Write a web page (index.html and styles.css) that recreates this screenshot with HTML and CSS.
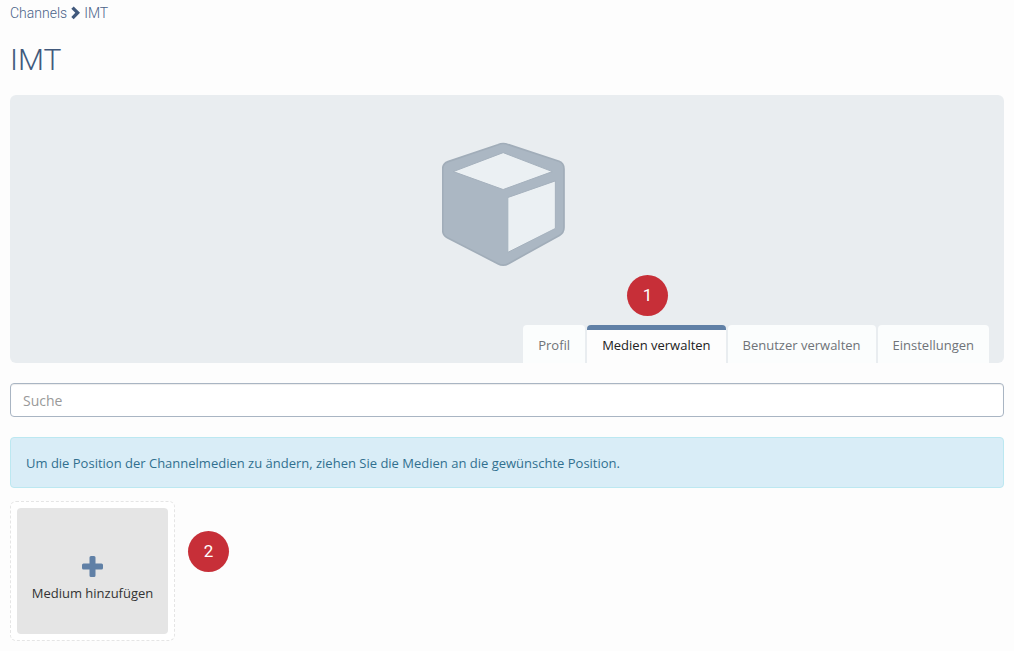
FILE: index.html
```html
<!DOCTYPE html>
<html lang="de">
<head>
<meta charset="utf-8">
<title>IMT</title>
<link rel="stylesheet" href="styles.css">
</head>
<body>
<main class="page">
  <nav class="breadcrumb">
    <a href="#">Channels</a>
    <svg class="chevron" viewBox="0 0 9 14" aria-hidden="true"><path d="M0.3 2.8 2.7 0.5 9 6.8 2.7 13.2 0.3 10.9 4.3 6.8Z"/></svg>
    <a href="#">IMT</a>
  </nav>
  <h1 class="title">IMT</h1>

  <section class="banner">
    <svg class="cube" viewBox="66 36 370 374" aria-hidden="true">
      <path class="cube-body" d="M234 43Q250 36 266 43L418 93Q433 99 433 116V292Q433 308 419 316L266 401Q250 410 234 401L82 323Q68 316 68 300V116Q68 100 84 94Z"/>
      <path class="cube-face" d="M250 67 398 124 250 178 100 124Z"/>
      <path class="cube-face" d="M264 202 407 152V295L264 367Z"/>
    </svg>
    <nav class="tabs">
      <a class="tab" href="#">Profil</a>
      <a class="tab tab-active" href="#" aria-current="page">Medien verwalten<span class="marker marker-tab">1</span></a>
      <a class="tab" href="#">Benutzer verwalten</a>
      <a class="tab" href="#">Einstellungen</a>
    </nav>
  </section>

  <input class="search" type="search" placeholder="Suche" aria-label="Suche">

  <p class="info">Um die Position der Channelmedien zu ändern, ziehen Sie die Medien an die gewünschte Position.</p>

  <div class="media-item">
    <button class="add" type="button">
      <svg class="plus" viewBox="0 0 21 21" aria-hidden="true"><path d="M9 0H12Q13.500 0 13.500 1.500V7.500H19.500Q21 7.500 21 9V12Q21 13.500 19.500 13.500H13.500V19.500Q13.500 21 12 21H9Q7.500 21 7.500 19.500V13.500H1.500Q0 13.500 0 12V9Q0 7.500 1.500 7.500H7.500V1.500Q7.500 0 9 0Z"/></svg>
      <span>Medium hinzufügen</span>
    </button>
    <span class="marker marker-add">2</span>
  </div>
</main>
</body>
</html>
```
FILE: styles.css
```css
* {
  box-sizing: border-box;
}

body {
  margin: 0;
  background: #fdfdfd;
  color: #333;
  font: 13px/20px "Open Sans", sans-serif;
}

.page {
  padding: 3px 10px 10px;
}

.breadcrumb {
  display: flex;
  align-items: center;
  gap: 4px;
  font: 300 14px/20px Roboto, sans-serif;
}

.breadcrumb a {
  color: #4a6288;
  text-decoration: none;
}

.chevron {
  width: 9px;
  height: 14px;
  fill: #41597c;
}

.title {
  margin: 19px 0 17px;
  color: #41597c;
  font: 300 30px/36px Roboto, sans-serif;
}

.banner {
  display: flex;
  flex-direction: column;
  align-items: center;
  padding-top: 47px;
  background: #e9edf0;
  border-radius: 6px;
}

.cube {
  width: 123px;
  height: 125px;
  margin-right: 7px;
}

.cube-body {
  fill: #abb7c3;
  stroke: #a1adb9;
  stroke-width: 5px;
}

.cube-face {
  fill: #ebf0f3;
  stroke: #a5b1bd;
  stroke-width: 3px;
}

.tabs {
  display: flex;
  align-self: flex-end;
  gap: 2px;
  margin-top: 58px;
  padding-right: 15px;
}

.tab {
  position: relative;
  padding: 10px 15px 8px;
  border-radius: 4px 4px 0 0;
  background: #fbfdfd;
  color: #6f7378;
  text-decoration: none;
}

.tab-active {
  padding-top: 5px;
  border-top: 5px solid #6080a6;
  background: #fdfdfd;
  color: #222;
}

.marker {
  position: absolute;
  width: 41px;
  height: 41px;
  border-radius: 50%;
  background: #c72f38;
  color: #fff;
  font: 17px/41px Roboto, sans-serif;
  text-align: center;
}

.marker-tab {
  top: -55px;
  left: 40px;
}

.marker-add {
  top: 29px;
  left: 177px;
}

.search {
  display: block;
  width: 100%;
  height: 34px;
  margin: 20px 0;
  padding: 6px 12px;
  border: 1px solid #a9b5c3;
  border-radius: 4px;
  background: #fff;
  box-shadow: inset 0 1px 1px rgba(0, 0, 0, 0.075);
  color: #555;
  font: 14px/20px "Open Sans", sans-serif;
  appearance: none;
}

.search::placeholder {
  color: #999;
}

.info {
  margin: 0 0 13px;
  padding: 15px 15px 14px;
  border: 1px solid #bce8f1;
  border-radius: 4px;
  background: #d9edf7;
  color: #31708f;
}

.media-item {
  position: relative;
  width: 165px;
  padding: 6px;
  border: 1px dashed #e5e5e5;
  border-radius: 6px;
  background: #fff;
}

.add {
  display: flex;
  flex-direction: column;
  align-items: center;
  gap: 6px;
  width: 100%;
  padding: 48px 0 31px;
  border: 0;
  border-radius: 4px;
  background: #e5e5e5;
  color: #333;
  font: inherit;
}

.plus {
  width: 21px;
  height: 21px;
  fill: #6080a6;
}
```
